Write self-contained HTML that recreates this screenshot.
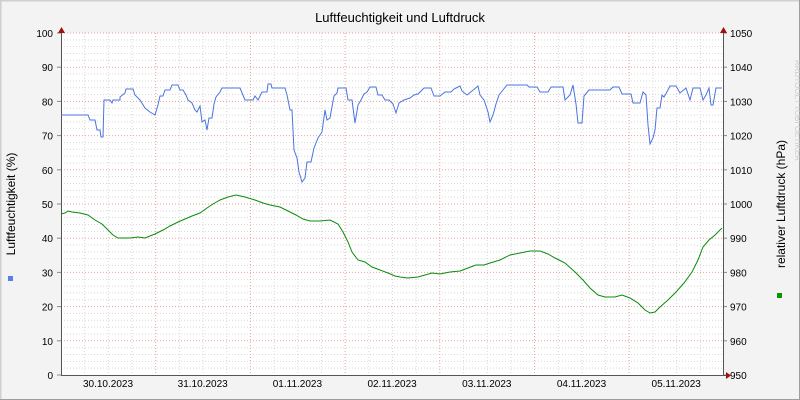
<!DOCTYPE html><html><head><style>body{margin:0;background:#f3f3f3}svg{display:block;font-family:"Liberation Sans","DejaVu Sans",sans-serif}</style></head><body>
<svg id="s" width="800" height="400" xmlns="http://www.w3.org/2000/svg">
<rect x="0" y="0" width="800" height="400" fill="#f3f3f3"/>
<path d="M0.5 0V400M0 0.5H800" stroke="#cfcfcf" stroke-width="2"/>
<path d="M799.5 0V400M0 399.5H800" stroke="#9e9e9e"/>
<rect x="61" y="33" width="662" height="342" fill="#fff"/>
<g id="g"></g>
<text x="400" y="22" font-size="13" text-anchor="middle" fill="#000">Luftfeuchtigkeit und Luftdruck</text>
<text transform="translate(15,204) rotate(-90)" font-size="12" text-anchor="middle">Luftfeuchtigkeit (%)</text>
<text transform="translate(785,204) rotate(-90)" font-size="12" text-anchor="middle">relativer Luftdruck (hPa)</text>
<text transform="translate(795,60) rotate(90)" font-size="8" fill="#ccc">RRDTOOL / TOBI OETIKER</text>
<rect x="8" y="276" width="5" height="5" fill="#5b7fe8"/>
<rect x="777" y="293" width="5" height="5" fill="#009900"/>
<polyline fill="none" stroke="#4a74e0" stroke-width="1" points="61,115 88,115 90,120 95,120 97,130 100,130 101,137 103,137 104,100 110,100 112,103 113,100 120,100 120,97 125,93 126,89 133,89 135,95 140,100 145,108 150,112 155,115 158,105 160,96 163,96 165,90 170,90 172,85 178,85 180,90 183,90 186,95 188,100 192,103 195,110 197,112 200,106 202,122 205,120 207,130 209,118 212,118 214,104 216,97 220,92 222,88 240,88 245,100 253,100 255,96 258,100 262,92 267,92 268,84 271,84 272,88 285,88 287,95 290,110 292,110 294,150 297,158 299,172 302,182 305,178 307,162 311,162 314,148 318,138 322,132 325,110 327,120 330,118 331,112 334,96 337,93 338,88 346,88 348,100 352,100 355,123 358,105 361,100 364,94 367,92 370,87 376,87 378,95 382,95 385,100 389,100 393,104 396,113 399,103 404,100 410,98 414,95 418,94 424,88 431,88 434,96 440,96 445,92 451,92 454,89 460,86 462,91 467,95 472,91 478,86 480,95 484,100 488,112 490,122 493,115 496,104 499,95 503,90 507,85 527,85 529,87 537,87 540,92 548,92 551,87 563,87 565,100 570,95 573,85 576,104 578,123 582,123 584,96 589,90 610,90 613,87 619,87 622,94 631,94 633,103 640,103 643,92 646,95 648,125 650,144 653,138 655,130 657,108 660,108 662,95 664,97 668,90 670,86 676,86 680,93 686,88 690,100 693,88 700,88 703,100 706,95 709,88 711,105 713,105 716,88 722,88"/>
<polyline fill="none" stroke="#0a8c0a" stroke-width="1" points="61,214 65,213 68,211 72,212 80,213 88,215 95,220 102,224 108,230 113,235 118,238 130,238 138,237 145,238 150,236 155,234 163,230 170,226 178,222 185,219 192,216 200,213 207,208 213,204 220,200 228,197 236,195 245,197 255,200 263,203 270,205 280,207 290,212 296,215 303,219 310,221 320,221 330,220 338,224 343,232 348,242 352,252 358,260 365,262 372,267 380,270 388,273 395,276 400,277 408,278 418,277 425,275 432,273 440,274 450,272 460,271 468,268 476,265 484,265 490,263 500,260 510,255 520,253 530,251 540,251 548,254 555,258 565,263 575,272 583,280 590,288 598,295 605,297 615,297 622,295 630,298 638,303 645,310 650,313 655,312 660,307 668,300 676,292 684,283 692,272 698,260 703,247 709,240 715,235 722,228"/>
</svg>
<script>
const g=document.getElementById('g');let h='';
const L=61,R=723,T=33,B=375;
for(let i=0;i<=50;i++){const y=B-i*6.84;if(i%5==0)continue;h+=`<line x1="${L}" x2="${R}" y1="${y}" y2="${y}" stroke="#d8d8d8" stroke-dasharray="1,2"/>`;}
for(let i=0;i<=28;i++){const x=L+i*23.68;if(i%4==0)continue;h+=`<line x1="${x}" x2="${x}" y1="${T}" y2="${B}" stroke="#d8d8d8" stroke-dasharray="1,2"/>`;}
for(let i=1;i<=10;i++){const y=B-i*34.2;h+=`<line x1="${L}" x2="${R}" y1="${y}" y2="${y}" stroke="#e8a0a0" stroke-dasharray="1,2"/>`;}
for(let i=1;i<7;i++){const x=L+i*94.7;h+=`<line x1="${x}" x2="${x}" y1="${T}" y2="${B}" stroke="#e8a0a0" stroke-dasharray="1,2"/>`;}
for(let i=0;i<=10;i++){const y=B-i*34.2;h+=`<text x="53" y="${y+4}" font-size="10" text-anchor="end">${i*10}</text><text x="730" y="${y+4}" font-size="10">${950+i*10}</text><line x1="57" x2="61" y1="${y}" y2="${y}" stroke="#888"/><line x1="723" x2="727" y1="${y}" y2="${y}" stroke="#888"/>`;}
const d=['30.10.2023','31.10.2023','01.11.2023','02.11.2023','03.11.2023','04.11.2023','05.11.2023'];
d.forEach((t,i)=>{h+=`<text x="${L+47+i*94.7}" y="387" font-size="10" text-anchor="middle">${t}</text>`;});
h+=`<line x1="${L}.5" x2="${L}.5" y1="28" y2="${B}" stroke="#555"/><line x1="${R}.5" x2="${R}.5" y1="28" y2="${B}" stroke="#555"/><line x1="${L}" x2="${R+5}" y1="${B}.5" y2="${B}.5" stroke="#555"/>`;
h+=`<path d="M58 33L61.5 27L65 33Z M720 33L723.5 27L727 33Z M726 372L731 375.5L726 379Z" fill="#a01010"/>`;
g.innerHTML=h;
</script>
</body></html>
